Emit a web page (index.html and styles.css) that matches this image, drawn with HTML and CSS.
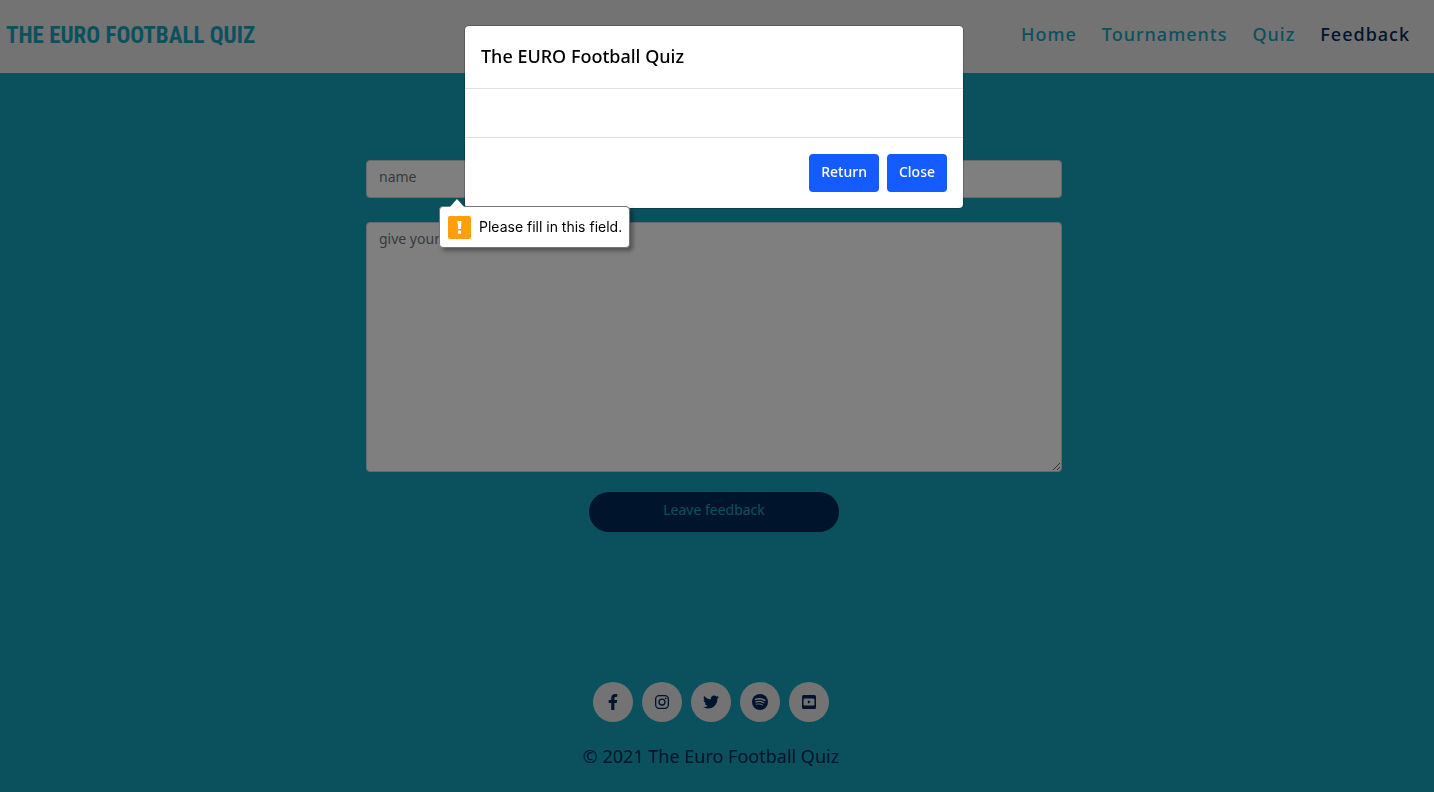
FILE: index.html
```html
<!DOCTYPE html>
<html lang="en">
<head>
<meta charset="utf-8">
<meta name="viewport" content="width=device-width, initial-scale=1">
<title>The Euro Football Quiz</title>
<link rel="stylesheet" href="styles.css">
</head>
<body>
<header class="site-header">
  <a class="brand" href="#">THE EURO FOOTBALL QUIZ</a>
  <nav class="site-nav" aria-label="Main">
    <a href="#">Home</a>
    <a href="#">Tournaments</a>
    <a href="#">Quiz</a>
    <a class="active" href="#" aria-current="page">Feedback</a>
  </nav>
</header>

<main class="content">
  <form class="feedback-form">
    <div class="field">
      <input class="control" type="text" aria-label="name" placeholder="name" required>
      <div class="hint" role="alert">
        <svg class="hint-icon" viewBox="0 0 23 23" aria-hidden="true"><rect width="23" height="23" rx="2" fill="#ff9f0a"/><path d="M9.5 5h4l-.6 8h-2.8z" fill="#fff"/><rect x="9.9" y="14.6" width="3.2" height="3.2" fill="#fff"/></svg>
        <span>Please fill in this field.</span>
      </div>
    </div>
    <textarea class="control message" aria-label="give your feedback" placeholder="give your feedback"></textarea>
    <button class="submit" type="button">Leave feedback</button>
  </form>
</main>

<footer class="site-footer">
  <div class="social">
    <a href="#" aria-label="Facebook"><svg viewBox="-96 0 512 512"><path d="M279.14 288l14.22-92.66h-88.91v-60.13c0-25.35 12.42-50.06 52.24-50.06h40.42V6.26S260.43 0 225.36 0c-73.22 0-121.08 44.38-121.08 124.72v70.62H22.89V288h81.39v224h100.17V288z"/></svg></a>
    <a href="#" aria-label="Instagram"><svg viewBox="0 0 512 512"><g fill="none" stroke="currentColor" stroke-width="42"><rect x="53" y="53" width="406" height="406" rx="112"/><circle cx="256" cy="256" r="95"/></g><circle cx="375" cy="137" r="27"/></svg></a>
    <a href="#" aria-label="Twitter"><svg viewBox="0 0 512 512"><path d="M459.37 151.716c.325 4.548.325 9.097.325 13.645 0 138.72-105.583 298.558-298.558 298.558-59.452 0-114.68-17.219-161.137-47.106 8.447.974 16.568 1.299 25.34 1.299 49.055 0 94.213-16.568 130.274-44.832-46.132-.975-84.792-31.188-98.112-72.772 6.498.974 12.995 1.624 19.818 1.624 9.421 0 18.843-1.3 27.614-3.573-48.081-9.747-84.143-51.98-84.143-102.985v-1.299c13.969 7.797 30.214 12.67 47.431 13.319-28.264-18.843-46.781-51.005-46.781-87.391 0-19.492 5.197-37.36 14.294-52.954 51.655 63.675 129.3 105.258 216.365 109.807-1.624-7.797-2.599-15.918-2.599-24.04 0-57.828 46.782-104.934 104.934-104.934 30.213 0 57.502 12.67 76.67 33.137 23.715-4.548 46.456-13.32 66.599-25.34-7.798 24.366-24.366 44.833-46.132 57.827 21.117-2.273 41.584-8.122 60.426-16.243-14.292 20.791-32.161 39.308-52.628 54.253z"/></svg></a>
    <a href="#" aria-label="Spotify"><svg viewBox="0 0 512 512"><circle cx="256" cy="256" r="256"/><g fill="none" stroke="#e6e6e6" stroke-linecap="round"><path d="M112 172c96-28 216-18 300 30" stroke-width="46"/><path d="M122 252c88-26 178-14 256 30" stroke-width="38"/><path d="M130 326c78-18 150-10 212 26" stroke-width="30"/></g></svg></a>
    <a href="#" aria-label="YouTube"><svg viewBox="0 0 512 512"><rect x="32" y="32" width="448" height="448" rx="48"/><rect x="82" y="142" width="348" height="228" rx="46" fill="#e6e6e6"/><path d="M220 202v108l94-54z"/></svg></a>
  </div>
  <p class="copyright">© 2021 The Euro Football Quiz</p>
</footer>

<div class="backdrop"></div>
<div class="modal-layer">
  <section class="modal" role="dialog" aria-modal="true" aria-labelledby="modal-title">
    <h5 class="modal-title" id="modal-title">The EURO Football Quiz</h5>
    <div class="modal-body"></div>
    <div class="modal-actions">
      <button class="btn" type="button">Return</button>
      <button class="btn" type="button">Close</button>
    </div>
  </section>
</div>
</body>
</html>
```
FILE: styles.css
```css
:root {
  --teal: #17a2bb;
  --navy: #002857;
  --grey: #e6e6e6;
}
* { box-sizing: border-box; }
body {
  margin: 0;
  min-height: 100vh;
  display: flex;
  flex-direction: column;
  background: var(--teal);
  font-family: "Noto Sans", "Open Sans", sans-serif;
  font-size: 14px;
  line-height: 24px;
}
a { text-decoration: none; }
button, input, textarea { font: inherit; }

.site-header {
  display: flex;
  align-items: center;
  justify-content: space-between;
  padding: 16px 24px 17px 6px;
  background: var(--grey);
}
.brand {
  color: var(--teal);
  font-family: "Roboto Condensed", Roboto, sans-serif;
  font-size: 23px;
  font-weight: 700;
  line-height: 40px;
}
.site-nav {
  display: flex;
  gap: 25px;
  padding-bottom: 4px;
  font-size: 18px;
  font-weight: 500;
  letter-spacing: 1px;
}
.site-nav a { color: var(--teal); }
.site-nav .active { color: var(--navy); }

.content {
  flex: 1;
  padding: 87px 6px 0 0;
}
.feedback-form {
  display: flex;
  flex-direction: column;
  width: 90%;
  max-width: 696px;
  margin: 0 auto;
}
.field {
  position: relative;
  display: flex;
  margin-bottom: 24px;
}
.control {
  width: 100%;
  padding: 4px 12px 8px;
  border: 1px solid #ced4da;
  border-radius: 4px;
  background: #fff;
  line-height: 24px;
}
.control::placeholder { color: #6c757d; opacity: 1; }
.message { height: 250px; }
.submit {
  width: 250px;
  height: 40px;
  margin: 20px auto 0;
  padding: 0 0 4px;
  border: 0;
  border-radius: 20px;
  background: var(--navy);
  color: var(--teal);
}

.hint {
  position: absolute;
  z-index: 30;
  top: 46px;
  left: 73px;
  display: flex;
  align-items: center;
  gap: 8px;
  padding: 8px 7px 8px 8px;
  border: 1px solid #777;
  border-radius: 4px;
  background: #fff;
  box-shadow: 3px 3px 4px rgba(0, 0, 0, .35);
  color: #000;
  font-family: Inter, sans-serif;
  font-size: 14px;
  white-space: nowrap;
}
.hint::before {
  content: "";
  position: absolute;
  top: -8px;
  left: 9px;
  width: 16px;
  height: 9px;
  background: #fff;
  clip-path: polygon(50% 0, 100% 100%, 0 100%);
}
.hint-icon { width: 23px; height: 23px; }

.site-footer {
  display: flex;
  flex-direction: column;
  align-items: center;
  gap: 22px;
  padding: 0 12px 24px 0;
}
.social { display: flex; gap: 9px; }
.social a {
  display: flex;
  align-items: center;
  justify-content: center;
  width: 40px;
  height: 40px;
  border-radius: 50%;
  background: var(--grey);
  color: var(--navy);
}
.social svg { width: 16px; height: 16px; fill: currentColor; }
.copyright {
  margin: 0;
  color: var(--navy);
  font-size: 18px;
}

.backdrop {
  position: fixed;
  z-index: 10;
  inset: 0;
  background: rgba(0, 0, 0, .5);
}
.modal-layer {
  position: fixed;
  z-index: 20;
  inset: 0;
  padding: 25px 6px 0 0;
}
.modal {
  width: 90%;
  max-width: 500px;
  margin: 0 auto;
  border: 1px solid rgba(0, 0, 0, .2);
  border-radius: 5px;
  background: #fff;
  background-clip: padding-box;
}
.modal-title {
  margin: 0;
  padding: 18px 16px 20px;
  border-bottom: 1px solid #dee2e6;
  font-size: 18px;
  font-weight: 500;
}
.modal-body { min-height: 48px; }
.modal-actions {
  display: flex;
  justify-content: flex-end;
  gap: 8px;
  padding: 16px;
  border-top: 1px solid #dee2e6;
}
.btn {
  padding: 6px 12px 8px;
  border: 0;
  border-radius: 4px;
  background: #145cff;
  color: #fff;
  font-weight: 500;
}
```
